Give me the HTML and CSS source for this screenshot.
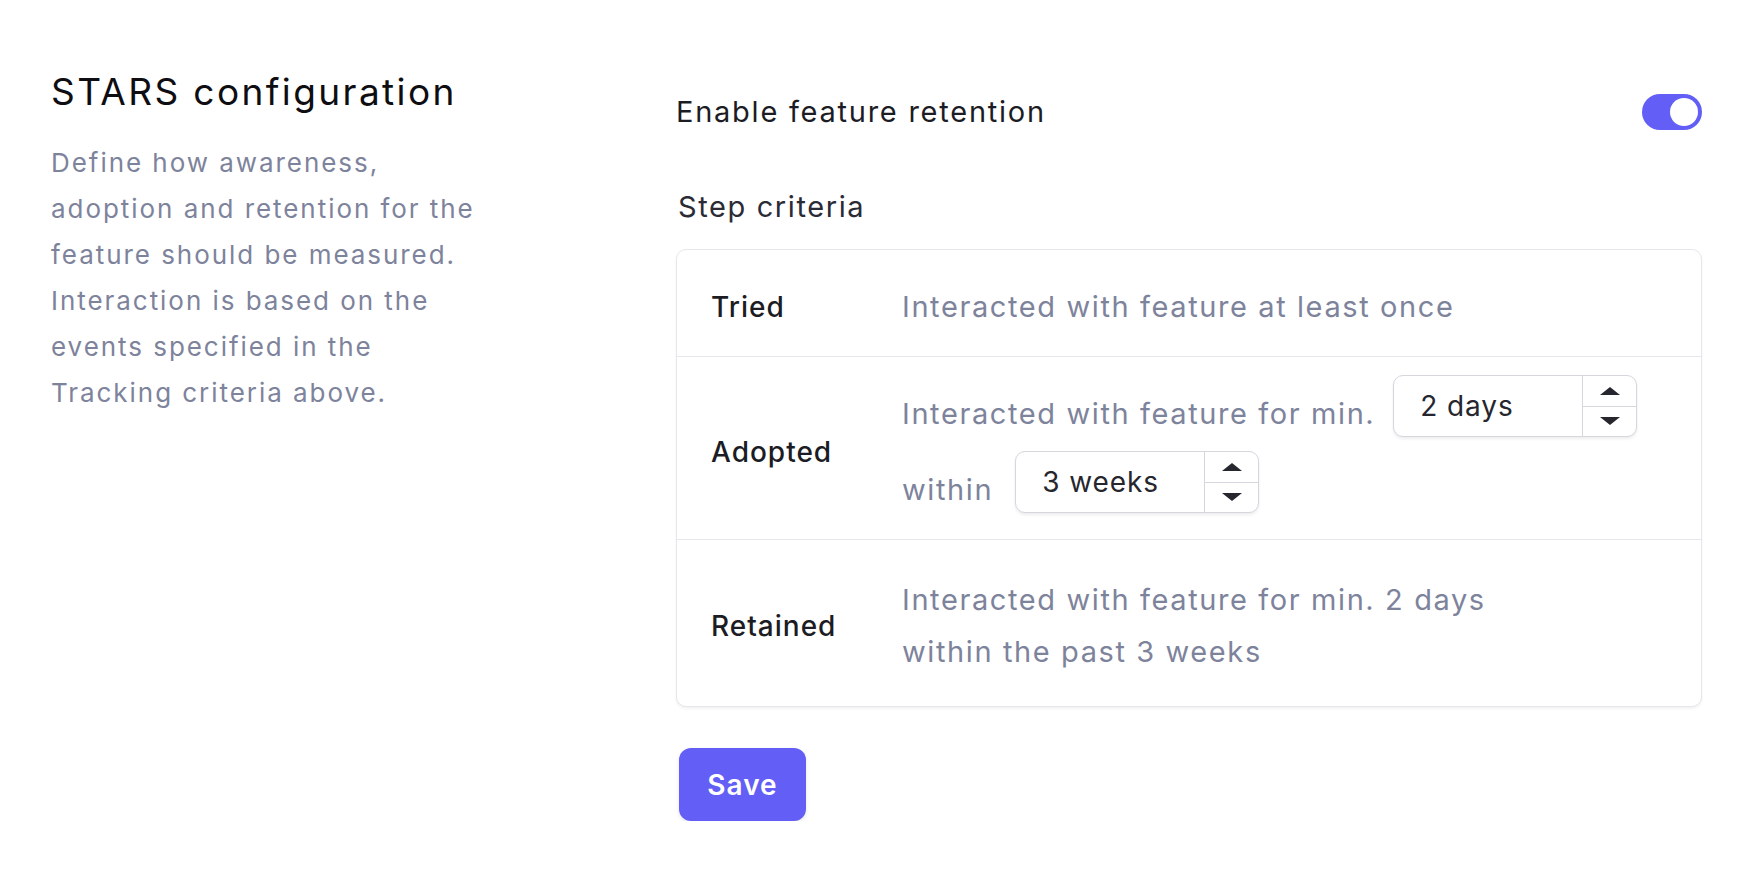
FILE: index.html
```html
<!DOCTYPE html>
<html lang="en">
<head>
<meta charset="utf-8">
<title>STARS configuration</title>
<link rel="stylesheet" href="styles.css">
</head>
<body>
<main class="page">
  <section class="intro">
    <h2 class="intro-title">STARS configuration</h2>
    <p class="intro-text">Define how awareness, adoption and retention for the feature should be measured. Interaction is based on the events specified in the Tracking criteria above.</p>
  </section>

  <section class="settings">
    <div class="setting-row">
      <span class="setting-label">Enable feature retention</span>
      <span class="toggle" role="switch" aria-checked="true"><span class="toggle-knob"></span></span>
    </div>

    <h3 class="section-title">Step criteria</h3>

    <div class="criteria-card">
      <div class="criteria-row row-tried">
        <div class="criteria-name">Tried</div>
        <div class="criteria-desc">Interacted with feature at least once</div>
      </div>

      <div class="criteria-row row-adopted">
        <div class="criteria-name">Adopted</div>
        <div class="criteria-desc criteria-flow">
          <span class="flow-text">Interacted with feature for min.</span>
          <span class="spin-input">
            <span class="spin-value">2 days</span>
            <span class="spin-buttons">
              <span class="spin-btn"><svg width="20" height="8" viewBox="0 0 20 8"><polygon points="10,0 20,8 0,8" fill="#26262e"/></svg></span>
              <span class="spin-btn"><svg width="20" height="8" viewBox="0 0 20 8"><polygon points="0,0 20,0 10,8" fill="#26262e"/></svg></span>
            </span>
          </span>
          <span class="flow-text flow-within">within</span>
          <span class="spin-input">
            <span class="spin-value">3 weeks</span>
            <span class="spin-buttons">
              <span class="spin-btn"><svg width="20" height="8" viewBox="0 0 20 8"><polygon points="10,0 20,8 0,8" fill="#26262e"/></svg></span>
              <span class="spin-btn"><svg width="20" height="8" viewBox="0 0 20 8"><polygon points="0,0 20,0 10,8" fill="#26262e"/></svg></span>
            </span>
          </span>
        </div>
      </div>

      <div class="criteria-row row-retained">
        <div class="criteria-name">Retained</div>
        <div class="criteria-desc">
          <div>Interacted with feature for min. 2 days</div>
          <div>within the past 3 weeks</div>
        </div>
      </div>
    </div>

    <button class="save-btn" type="button">Save</button>
  </section>
</main>
</body>
</html>
```

FILE: styles.css
```css
* { box-sizing: border-box; }

html, body {
  margin: 0;
  background: #ffffff;
}

body {
  font-family: Inter, "Noto Sans", "Liberation Sans", sans-serif;
  color: #1c1c24;
}

.page {
  display: grid;
  grid-template-columns: 450px 1026px;
  column-gap: 175px;
  padding: 70px 0 0 51px;
}

/* Left column */
.intro-title {
  margin: 0;
  font-size: 37px;
  line-height: 44px;
  font-weight: 400;
  letter-spacing: 2.4px;
  color: #0d0d12;
}

.intro-text {
  margin: 26px 0 0;
  max-width: 429px;
  font-size: 26px;
  line-height: 46px;
  letter-spacing: 1.95px;
  color: #7e839c;
}

/* Right column */
.setting-row {
  display: flex;
  align-items: center;
  justify-content: space-between;
  margin-top: 24px;
  height: 36px;
}

.setting-label {
  font-size: 29px;
  line-height: 36px;
  letter-spacing: 1.75px;
  color: #1c1c24;
}

.toggle {
  display: flex;
  align-items: center;
  justify-content: flex-end;
  width: 60px;
  height: 36px;
  padding: 4px;
  border-radius: 18px;
  background: #625ef6;
}

.toggle-knob {
  width: 28px;
  height: 28px;
  border-radius: 50%;
  background: #ffffff;
}

.section-title {
  margin: 60px 0 0 2px;
  font-size: 29px;
  line-height: 34px;
  font-weight: 400;
  letter-spacing: 1.6px;
  color: #2b2b36;
}

.criteria-card {
  margin-top: 25px;
  border: 1.5px solid #e6e6ec;
  border-radius: 10px;
  box-shadow: 0 2px 3px rgba(20, 20, 40, 0.05);
  background: #ffffff;
}

.criteria-row {
  display: grid;
  grid-template-columns: 191px 1fr;
  align-items: center;
  padding: 31px 34px 23px;
}

.criteria-row + .criteria-row {
  border-top: 1.5px solid #e6e6ec;
}

.row-adopted {
  padding-top: 18px;
  padding-bottom: 26px;
}

.row-retained {
  padding-top: 34px;
  padding-bottom: 28px;
}

.criteria-name {
  font-size: 28px;
  line-height: 52px;
  font-weight: 500;
  letter-spacing: 1px;
  color: #1c1c24;
}

.row-adopted .criteria-name {
  padding-top: 16px;
}

.criteria-desc {
  font-size: 29px;
  line-height: 52px;
  letter-spacing: 1.6px;
  color: #7e839c;
}

.criteria-flow {
  display: flex;
  flex-wrap: wrap;
  align-items: flex-end;
  column-gap: 18px;
  row-gap: 14px;
}

.flow-text {
  line-height: 46px;
}

.flow-within {
  margin-right: 4px;
}

.spin-input {
  display: inline-flex;
  align-items: stretch;
  width: 244px;
  height: 62px;
  border: 1.5px solid #d6d6de;
  border-radius: 10px;
  box-shadow: 0 2px 3px rgba(20, 20, 40, 0.08);
  background: #ffffff;
  overflow: hidden;
}

.spin-value {
  flex: 1;
  display: flex;
  align-items: center;
  padding-left: 26px;
  font-size: 28px;
  letter-spacing: 0.9px;
  color: #26262e;
}

.spin-buttons {
  display: flex;
  flex-direction: column;
  width: 54px;
  border-left: 1.5px solid #d6d6de;
}

.spin-btn {
  flex: 1;
  display: flex;
  align-items: center;
  justify-content: center;
}

.spin-btn + .spin-btn {
  border-top: 1.5px solid #d6d6de;
}

.spin-btn svg {
  display: block;
}

.save-btn {
  display: block;
  margin: 41px 0 0 3px;
  width: 127px;
  height: 73px;
  border: 0;
  border-radius: 12px;
  background: #625ef6;
  color: #ffffff;
  font-family: inherit;
  font-size: 28px;
  font-weight: 600;
  letter-spacing: 1px;
  box-shadow: 0 2px 4px rgba(20, 20, 40, 0.1);
}
```
